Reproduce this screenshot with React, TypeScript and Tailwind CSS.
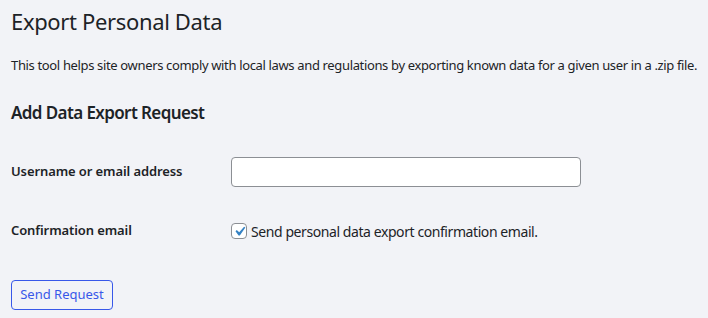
export default function App() {
  return (
    <div className="min-h-[318px] bg-[#f2f3f7] px-[11px] pt-[7px] text-[#1d2327] font-['Noto_Sans',sans-serif]">
      <h1 className="text-[22px] leading-[29px] font-normal tracking-[-0.35px]">Export Personal Data</h1>
      <p className="mt-[19px] text-[13px] leading-[20px] whitespace-nowrap tracking-[-0.35px]">
        This tool helps site owners comply with local laws and regulations by exporting known data for a given user in a .zip file.
      </p>
      <h2 className="mt-[27px] text-[17px] leading-[22px] font-semibold tracking-[-0.6px]">Add Data Export Request</h2>
      <div className="mt-[33px] flex items-center">
        <label className="w-[220px] text-[13px] font-semibold tracking-[-0.1px]">Username or email address</label>
        <input type="text" className="w-[350px] h-[30px] rounded-[4px] border border-[#8c8f94] bg-white px-2 text-[14px] outline-none" />
      </div>
      <div className="mt-[34px] flex h-[20px] items-center">
        <span className="w-[220px] text-[13px] font-semibold tracking-[-0.1px]">Confirmation email</span>
        <label className="flex items-center gap-[4px] text-[14px] tracking-[-0.42px]">
          <span className="flex h-[16px] w-[16px] items-center justify-center rounded-[4px] border border-[#8c8f94] bg-white">
            <svg viewBox="0 0 20 20" className="h-[19px] w-[19px] shrink-0">
              <path d="M14.83 4.89l1.34.94-5.81 8.38H9.02L5.78 9.67l1.34-1.25 2.57 2.4z" fill="#3582c4" />
            </svg>
          </span>
          Send personal data export confirmation email.
        </label>
      </div>
      <button className="mt-[39px] h-[30px] w-[102px] rounded-[4px] border border-[#3858e9] text-[13px] text-[#3858e9]">
        Send Request
      </button>
    </div>
  );
}
